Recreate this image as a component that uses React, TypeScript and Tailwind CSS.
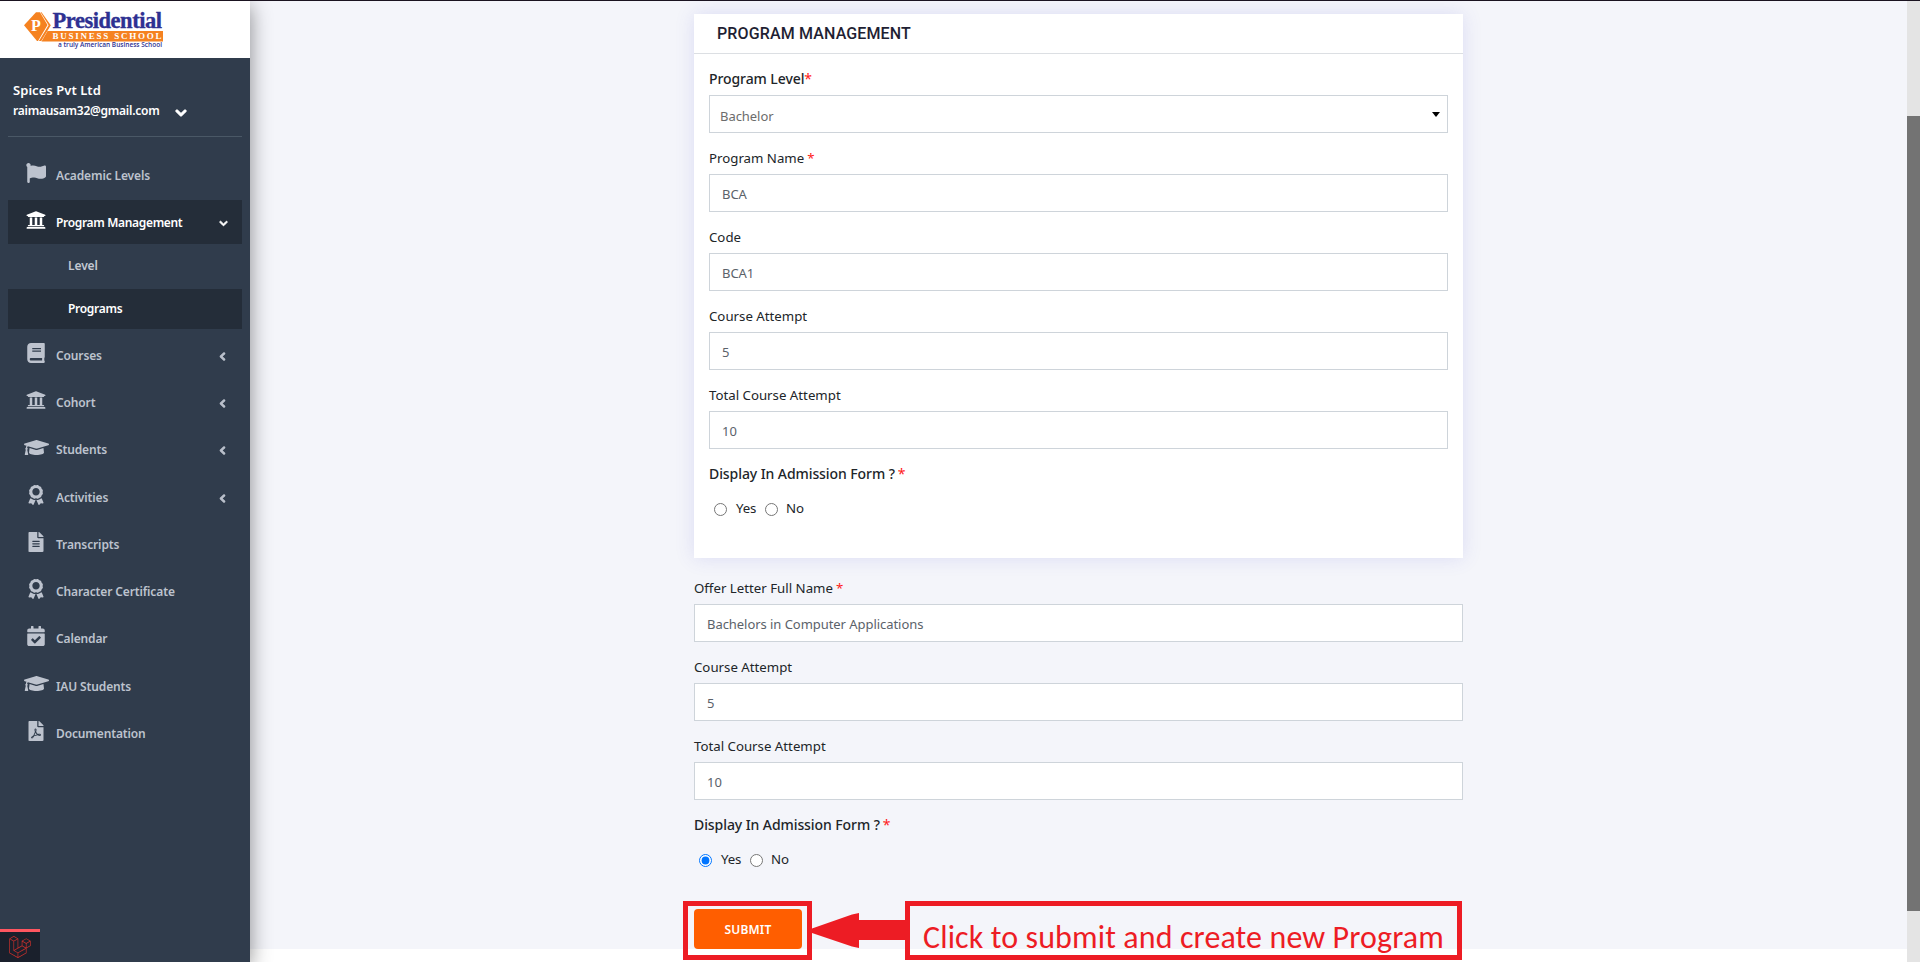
import React from 'react';
import {
  FaAward,
  FaBook,
  FaCalendarCheck,
  FaChevronDown,
  FaChevronLeft,
  FaFileAlt,
  FaFilePdf,
  FaFlag,
  FaGraduationCap,
  FaLaravel,
  FaUniversity,
} from 'react-icons/fa';
import type { IconType } from 'react-icons';

function Logo() {
  return (
    <svg width="250" height="57" viewBox="0 1 250 57" role="img" aria-label="Presidential Business School">
      <path d="M24 25.3 36 12.3h4L47.5 25 38 41h-1z" fill="#f58220" />
      <path d="M41.5 12.3 50.8 25.3 41.3 41h-2.4L48.6 25.3 40.6 12.3z" fill="#f58220" />
      <path d="M47.5 31H163v10.5H41.5z" fill="#f58220" />
      <text x="31" y="30.5" fill="#fff" fontSize="16" fontFamily="Liberation Serif, serif">P</text>
      <text x="52.5" y="27.8" fill="#2e3192" stroke="#2e3192" strokeWidth=".35" fontSize="22.5" textLength="109.5" fontFamily="Liberation Serif, serif">Presidential</text>
      <text x="52.5" y="39.3" fill="#fff" fontSize="9" fontWeight="700" textLength="109" fontFamily="Liberation Serif, serif">BUSINESS SCHOOL</text>
      <text x="58" y="46.6" fill="#2e3192" fontSize="6.4" fontWeight="600" textLength="104" lengthAdjust="spacingAndGlyphs" fontFamily="Open Sans, sans-serif">a truly American Business School</text>
    </svg>
  );
}

type Item = { icon: IconType; label: string; arrow?: boolean; wide?: boolean };

const ITEMS: Item[] = [
  { icon: FaBook, label: 'Courses', arrow: true },
  { icon: FaUniversity, label: 'Cohort', arrow: true },
  { icon: FaGraduationCap, label: 'Students', arrow: true, wide: true },
  { icon: FaAward, label: 'Activities', arrow: true },
  { icon: FaFileAlt, label: 'Transcripts' },
  { icon: FaAward, label: 'Character Certificate' },
  { icon: FaCalendarCheck, label: 'Calendar' },
  { icon: FaGraduationCap, label: 'IAU Students', wide: true },
  { icon: FaFilePdf, label: 'Documentation' },
];

function NavItem({ icon: Icon, label, arrow, wide, active }: Item & { active?: boolean }) {
  return (
    <li className={`flex h-11 items-center pl-[14.5px] pr-[13px] ${active ? 'bg-[#242d39] text-white' : 'text-[#bdc3ce]'}`}>
      <span className="mb-[5px] flex w-[27px] shrink-0 justify-center">
        <Icon className={`max-w-none shrink-0 ${wide ? 'h-[25px] w-[25px]' : 'h-5 w-auto'}`} />
      </span>
      <span className={`ml-[6.5px] grow pt-px ${active ? 'tracking-[-0.33px]' : 'tracking-[-0.13px]'}`}>{label}</span>
      {arrow && !active && <FaChevronLeft className="mt-[2px] mr-[2px] h-[9px] w-auto overflow-visible" stroke="currentColor" strokeWidth="60" />}
      {active && <FaChevronDown className="mt-[3px] mr-px h-[9px] w-[9px] overflow-visible" stroke="currentColor" strokeWidth="50" />}
    </li>
  );
}

function Sidebar() {
  return (
    <aside className="relative z-10 flex w-[250px] shrink-0 flex-col bg-[#303c4c] font-['Noto_Sans',sans-serif] text-[12px] font-semibold shadow-[0_5px_20px_rgba(0,0,0,0.45)]">
      <div className="h-[57px] bg-white">
        <Logo />
      </div>
      <div className="mx-2 flex h-[79px] flex-col border-b border-[#4a5866] pl-[5px] pt-[22px] text-white">
        <span className="text-[13px] leading-5 tracking-[0.05px]">Spices Pvt Ltd</span>
        <span className="flex items-center leading-[21px] tracking-[-0.25px]">
          raimausam32@gmail.com
          <FaChevronDown className="ml-[16px] mt-[5px] h-[12px] w-[12px] overflow-visible" stroke="currentColor" strokeWidth="50" />
        </span>
      </div>
      <ul className="mx-2 mt-[16px] flex flex-col gap-[3.25px]">
        <NavItem icon={FaFlag} label="Academic Levels" />
        <NavItem icon={FaUniversity} label="Program Management" active />
        <li className="flex h-[39px] items-center pb-[2px] pl-[60px] tracking-[-0.1px] text-[#c3c8d2]">Level</li>
        <li className="mb-[1px] mt-[-0.75px] flex h-10 items-center bg-[#242d39] pb-px pl-[60px] tracking-[-0.3px] text-white">Programs</li>
        {ITEMS.map((item) => (
          <NavItem key={item.label} {...item} />
        ))}
      </ul>
      <div className="mt-auto flex h-[33px] w-10 justify-center border-t-[3px] border-[#ff5660] bg-[#1a202c] pt-[4px]">
        <FaLaravel className="h-[22px] w-[22px] text-[#c9302c]" />
      </div>
    </aside>
  );
}

function Label({ text, strong, required, tight }: { text: string; strong?: boolean; required?: boolean; tight?: boolean }) {
  return (
    <div className={`flex h-[41px] items-center text-[#212529] ${strong ? 'pt-[7px] text-[14px] font-medium tracking-[-0.08px]' : 'pt-[10px] text-[13.25px]'}`}>
      {text}
      {required && <span className={`font-normal text-[#ff1a1a] ${tight ? '' : 'ml-[3px]'}`}>*</span>}
    </div>
  );
}

function Field({ label, value, required }: { label: string; value: string; required?: boolean }) {
  return (
    <div>
      <Label text={label} required={required} />
      <div className="flex h-[38px] items-center border border-[#ced4da] bg-white pl-[12px] pt-[3px] text-[13px] tracking-[-0.05px] text-[#5b626a]">{value}</div>
    </div>
  );
}

function AdmissionChoice({ name, yes }: { name: string; yes?: boolean }) {
  return (
    <div>
      <Label text="Display In Admission Form ?" strong required />
      <div className="flex h-[38px] items-center pl-[5px] text-[13.25px] text-[#212529]">
        <input type="radio" name={name} defaultChecked={yes} className="mt-px h-[13px] w-[13px]" />
        <span className="ml-[9px] w-[29px] tracking-[-0.2px]">Yes</span>
        <input type="radio" name={name} className="mt-px h-[13px] w-[13px]" />
        <span className="ml-[8px]">No</span>
      </div>
    </div>
  );
}

export default function App() {
  return (
    <div className="relative flex h-[962px] w-full overflow-hidden border-t border-[#1a1320] bg-white">
      <Sidebar />
      <main className="h-[948px] grow bg-[#f4f5fa] pl-[444px] pt-[13px] font-['Noto_Sans',sans-serif]">
        <div className="w-[769px]">
          <section className="h-[544px] bg-white shadow-[0_0_18px_rgba(80,80,210,0.15)]">
            <h2 className="flex h-10 items-center border-b border-[#dcdfe3] pl-[23px] font-['Roboto',sans-serif] text-[16px] font-medium tracking-[0.14px] text-[#1f1f33]">PROGRAM MANAGEMENT</h2>
            <div className="px-[15px]">
              <Label text="Program Level" strong required tight />
              <div className="flex h-[38px] items-center justify-between border border-[#ced4da] pl-[10px] pr-[7px] pt-[5px] text-[13px] tracking-[-0.05px] text-[#6c6c6c]">
                Bachelor
                <svg width="8" height="5" viewBox="0 0 8 5" className="mb-[5px]">
                  <path d="M0 0h8L4 5z" fill="#000" />
                </svg>
              </div>
              <Field label="Program Name" value="BCA" required />
              <Field label="Code" value="BCA1" />
              <Field label="Course Attempt" value="5" />
              <Field label="Total Course Attempt" value="10" />
              <AdmissionChoice name="program" />
            </div>
          </section>
          <section className="pt-[5px]">
            <Field label="Offer Letter Full Name" value="Bachelors in Computer Applications" required />
            <Field label="Course Attempt" value="5" />
            <Field label="Total Course Attempt" value="10" />
            <AdmissionChoice name="offer" yes />
            <button className="mt-[30px] block h-10 w-[108px] rounded bg-[#ff5e00] pt-px text-[12px] font-semibold tracking-[0.15px] text-white">SUBMIT</button>
          </section>
        </div>
      </main>
      <div className="w-[13px] shrink-0 bg-[#e4e4e4] pt-[115px]">
        <div className="h-[795px] bg-[#737373]" />
      </div>
      <div className="absolute left-[683px] top-[900px] z-20 flex h-[59px] w-[779px] items-center">
        <div className="h-full w-[129px] shrink-0 border-[5px] border-[#ed1c24]" />
        <svg width="93" height="35" viewBox="0 0 93 35" className="shrink-0">
          <path d="M0 15.5 40 1.5 47 0v7h46v20H47v8l-7-1.5L0 20z" fill="#ed1c24" />
        </svg>
        <div className="flex h-full grow items-center whitespace-nowrap border-[5px] border-[#ed1c24] pl-[13px] pt-[14px] font-['Carlito',sans-serif] text-[32px] leading-none tracking-[0.11px] text-[#ed1c24]">
          Click to submit and create new Program
        </div>
      </div>
    </div>
  );
}
